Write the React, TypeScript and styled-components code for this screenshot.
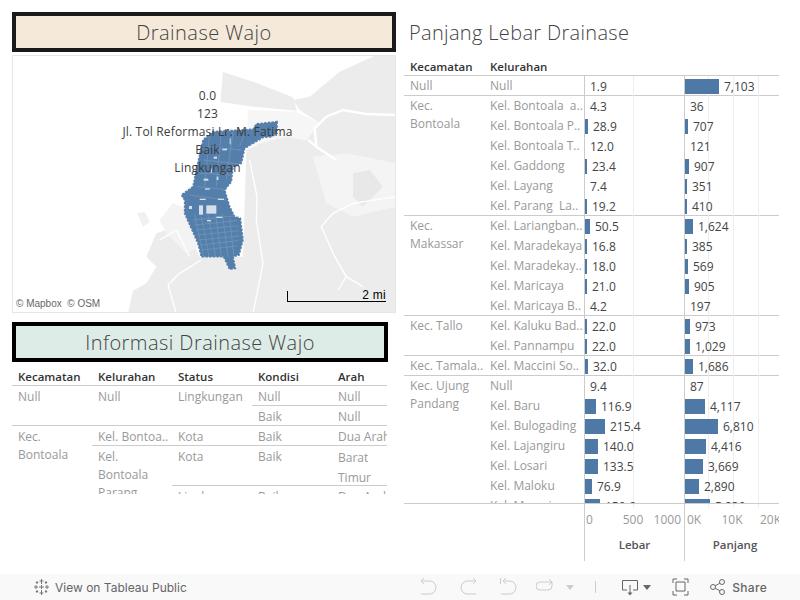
import React from 'react';
import styled, { createGlobalStyle } from 'styled-components';

const GlobalStyle = createGlobalStyle`
    html, body {
        margin: 0;
        padding: 0;
        background: #fff;
    }
    body {
        width: 800px;
        height: 600px;
        overflow: hidden;
        font-family: "Open Sans", Lato, sans-serif;
    }
`;

const Page = styled.div`
    width: 800px;
    height: 600px;
    display: flex;
    flex-direction: column;
`;

const Dashboard = styled.div`
    height: 574px;
    display: flex;
    overflow: hidden;
`;

const LeftColumn = styled.div`
    width: 400px;
    padding: 12px 0 0 12px;
    box-sizing: border-box;
`;

const Banner = styled.div<{ $bg: string; $border: string; $width: number }>`
    width: ${p => p.$width}px;
    height: 40px;
    box-sizing: border-box;
    border: 4px solid ${p => p.$border};
    background: ${p => p.$bg};
    color: #444;
    font-size: 20px;
    font-weight: 300;
    letter-spacing: 0.45px;
    line-height: 33px;
    text-align: center;
`;

const MapFrame = styled.div`
    position: relative;
    width: 384px;
    height: 258px;
    margin: 3px 0 9px;
    box-sizing: border-box;
    border: 1px solid #e6e6e6;
    overflow: hidden;
`;

const MapSvg = styled.svg`
    display: block;
`;

const MapLabels = styled.div`
    position: absolute;
    top: 31px;
    left: 0;
    width: 389px;
    text-align: center;
    font-size: 12px;
    line-height: 18px;
    letter-spacing: 0.17px;
    color: #3c3c3c;
`;

const Attribution = styled.div`
    position: absolute;
    left: 1px;
    bottom: 1px;
    padding: 0 2px;
    height: 14px;
    line-height: 14px;
    background: rgba(255, 255, 255, 0.7);
    font-family: "Liberation Sans", sans-serif;
    font-size: 10px;
    white-space: pre;
    color: #666;
`;

const Scale = styled.div`
    position: absolute;
    right: 9px;
    bottom: 10px;
    width: 98px;
    height: 10px;
    border-left: 1px solid #000;
    border-bottom: 1px solid #000;
    font-family: "Liberation Sans", sans-serif;
    font-size: 12px;
    line-height: 8px;
    letter-spacing: 0.3px;
    text-align: right;
    color: #000;
`;

const InfoTable = styled.div`
    width: 375px;
    height: 132px;
    overflow: hidden;
    display: grid;
    grid-template-columns: 80px 80px 80px 80px 55px;
    grid-template-rows: 23px;
    grid-auto-rows: 20px;
    font-size: 12px;
    color: #999;
`;

const HeadCell = styled.div`
    padding-left: 6px;
    line-height: 30px;
    color: #333;
    font-weight: 600;
    font-size: 11.5px;
`;

const InfoCell = styled.div<{ $rows?: number; $leading?: number; $col?: number }>`
    grid-row: span ${p => p.$rows || 1};
    ${p => (p.$col ? `grid-column: ${p.$col};` : '')}
    padding: 2px 0 0 6px;
    line-height: ${p => p.$leading || 18}px;
    border-top: 1px solid #ccc;
    box-sizing: border-box;
    overflow: hidden;
    white-space: nowrap;
`;

const RightColumn = styled.div`
    width: 400px;
`;

const SheetTitle = styled.div`
    padding: 20px 0 0 9px;
    height: 26px;
    font-size: 20px;
    font-weight: 300;
    letter-spacing: 0.33px;
    line-height: 26px;
    color: #444;
`;

const ColumnHeads = styled.div`
    display: flex;
    height: 29px;
    margin-left: 4px;
    box-sizing: border-box;
    padding-top: 13px;
`;

const ColumnHead = styled.div`
    width: 80px;
    padding-left: 6px;
    box-sizing: border-box;
    font-size: 11.5px;
    font-weight: 600;
    line-height: 16px;
    color: #333;
`;

const ChartBody = styled.div`
    width: 375px;
    margin-left: 4px;
    height: 428px;
    overflow: hidden;
`;

const Group = styled.div`
    display: flex;
    border-top: 1px solid #ccc;
    margin-bottom: -1px;
`;

const GroupName = styled.div`
    width: 80px;
    flex: none;
    padding: 1px 0 0 6px;
    box-sizing: border-box;
    font-size: 12px;
    line-height: 18px;
    color: #999;
    white-space: nowrap;
`;

const Row = styled.div`
    display: flex;
    height: 20px;
`;

const RowName = styled.div`
    width: 100px;
    padding-left: 6px;
    box-sizing: border-box;
    font-size: 12px;
    line-height: 20px;
    color: #999;
    white-space: pre;
    overflow: hidden;
`;

const Pane = styled.div<{ $width: number; $lines: number[] }>`
    display: flex;
    align-items: center;
    width: ${p => p.$width}px;
    height: 20px;
    box-sizing: border-box;
    border-left: 1px solid #ccc;
    background-image: ${p =>
        p.$lines.map(() => 'linear-gradient(#eeeeee, #eeeeee)').join(', ')};
    background-size: 1px 100%;
    background-repeat: no-repeat;
    background-position: ${p => p.$lines.map(x => `${x}px 0`).join(', ')};
`;

const Bar = styled.div`
    height: 15px;
    flex: none;
    background: #4e79a7;
`;

const BarValue = styled.span`
    margin-left: 5px;
    font-size: 12px;
    color: #444;
    white-space: nowrap;
`;

const AxisArea = styled.div`
    display: flex;
    width: 375px;
    margin-left: 4px;
    height: 58px;
    border-top: 1px solid #ccc;
    box-sizing: border-box;
`;

const AxisSpacer = styled.div`
    width: 180px;
`;

const AxisColumn = styled.div<{ $width: number }>`
    position: relative;
    width: ${p => p.$width}px;
    box-sizing: border-box;
    border-left: 1px solid #ccc;
    overflow: hidden;
`;

const AxisTicks = styled.div`
    height: 29px;
    font-size: 12px;
    line-height: 16px;
    color: #999;
    white-space: nowrap;
`;

const Tick = styled.span<{ $x: number; $align?: string }>`
    position: absolute;
    top: 8px;
    left: ${p => p.$x}px;
    width: 40px;
    text-align: ${p => p.$align || 'center'};
`;

const GridStub = styled.i<{ $x: number }>`
    position: absolute;
    top: 0;
    left: ${p => p.$x}px;
    width: 1px;
    height: 4px;
    background: #eee;
`;

const AxisTitle = styled.div<{ $shift?: number }>`
    text-align: center;
    padding: 4px 0 0 ${p => p.$shift || 0}px;
    font-size: 11.5px;
    font-weight: 600;
    line-height: 16px;
    color: #555;
`;

const Toolbar = styled.div`
    height: 26px;
    display: flex;
    align-items: center;
    background: #f9f9f9;
    padding-left: 33px;
    font-family: Inter, "Liberation Sans", sans-serif;
    font-size: 12px;
    color: #666;
`;

const LogoIcon = styled.svg`
    flex: none;
`;

const ToolbarText = styled.span<{ $strong?: boolean }>`
    margin-left: ${p => (p.$strong ? 6 : 5)}px;
    font-weight: ${p => (p.$strong ? 500 : 400)};
    letter-spacing: ${p => (p.$strong ? 0.3 : 0)}px;
`;

const ToolGroup = styled.div`
    margin-left: auto;
    display: flex;
    align-items: center;
    padding-right: 33px;
`;

const ToolIcon = styled.svg<{ $gap: number; $w: number }>`
    width: ${p => p.$w}px;
    height: 18px;
    margin-left: ${p => p.$gap}px;
    flex: none;
    fill: none;
`;

type Item = { name: string; lebar: number; panjang: number };
type GroupData = { name: string[]; items: Item[] };

const groups: GroupData[] = [
    { name: ['Null'], items: [{ name: 'Null', lebar: 1.9, panjang: 7103 }] },
    {
        name: ['Kec.', 'Bontoala'],
        items: [
            { name: 'Kel. Bontoala  a..', lebar: 4.3, panjang: 36 },
            { name: 'Kel. Bontoala P..', lebar: 28.9, panjang: 707 },
            { name: 'Kel. Bontoala T..', lebar: 12.0, panjang: 121 },
            { name: 'Kel. Gaddong', lebar: 23.4, panjang: 907 },
            { name: 'Kel. Layang', lebar: 7.4, panjang: 351 },
            { name: 'Kel. Parang  La..', lebar: 19.2, panjang: 410 },
        ],
    },
    {
        name: ['Kec.', 'Makassar'],
        items: [
            { name: 'Kel. Lariangban..', lebar: 50.5, panjang: 1624 },
            { name: 'Kel. Maradekaya', lebar: 16.8, panjang: 385 },
            { name: 'Kel. Maradekay..', lebar: 18.0, panjang: 569 },
            { name: 'Kel. Maricaya', lebar: 21.0, panjang: 905 },
            { name: 'Kel. Maricaya B..', lebar: 4.2, panjang: 197 },
        ],
    },
    {
        name: ['Kec. Tallo'],
        items: [
            { name: 'Kel. Kaluku Bad..', lebar: 22.0, panjang: 973 },
            { name: 'Kel. Pannampu', lebar: 22.0, panjang: 1029 },
        ],
    },
    { name: ['Kec. Tamala..'], items: [{ name: 'Kel. Maccini So..', lebar: 32.0, panjang: 1686 }] },
    {
        name: ['Kec. Ujung', 'Pandang'],
        items: [
            { name: 'Null', lebar: 9.4, panjang: 87 },
            { name: 'Kel. Baru', lebar: 116.9, panjang: 4117 },
            { name: 'Kel. Bulogading', lebar: 215.4, panjang: 6810 },
            { name: 'Kel. Lajangiru', lebar: 140.0, panjang: 4416 },
            { name: 'Kel. Losari', lebar: 133.5, panjang: 3669 },
            { name: 'Kel. Maloku', lebar: 76.9, panjang: 2890 },
            { name: 'Kel. Mamajang', lebar: 159.6, panjang: 5239 },
        ],
    },
];

const barWidth = (value: number, scale: number) => {
    const w = value * scale;
    return w < 1.5 ? 0 : Math.round(w);
};

const blueOutline =
    'M832 365 L832 400 L815 410 L790 412 L760 430 L735 445 L725 490 L700 500 L695 545 L675 570 L690 620 L705 650 L722 655 L730 720 L718 765 L700 770 L707 805 L690 808 L672 770 L605 770 L595 730 L555 640 L555 600 L545 585 L580 560 L590 510 L610 420 L640 395 L760 388 L770 372 Z';

const DrainageMap = () => (
    <MapSvg width="382" height="256" viewBox="40 168 1146 768">
        <rect x="0" y="0" width="1300" height="1000" fill="#fff" />
        <path
            fill="#ececec"
            d="M385 940 L400 872 L440 850 L470 800 L440 770 L470 700 L530 680 L560 690 L600 770 L730 770 L740 450 L780 430 L860 410 L920 420 L960 370 L900 330 L880 300 L930 290 L1020 215 L1130 165 L1190 165 L1190 940 Z"
        />
        <path fill="#ececec" d="M670 216 L760 245 L880 292 L892 332 L760 320 L662 306 Z" />
        <path fill="#f6f6f6" d="M745 330 L890 335 L960 370 L920 420 L860 410 L780 430 L740 445 Z" />
        <path fill="#f4f4f4" d="M940 470 L1040 460 L1190 490 L1190 620 L1060 650 L980 610 Z" />
        <path fill="#e8e8e8" d="M1060 520 L1110 510 L1150 560 L1090 620 L1060 590 Z" />
        <path fill="#f3f3f3" d="M520 610 L550 620 L600 740 L560 760 L500 700 L480 660 Z" />
        <path fill="#f0f0f0" d="M412 640 L435 635 L450 665 L430 680 Z" />
        <path
            fill="none"
            stroke="#fff"
            strokeWidth="7"
            d="M1190 345 L1100 342 L1030 330 L980 350 L945 385 L950 440 L925 420 M950 440 L1010 480"
        />
        <path
            fill="none"
            stroke="#fff"
            strokeWidth="4"
            d="M750 480 L772 590 L770 660 L790 790 L760 940 M1190 590 L1060 610 L1000 640 L965 680 L1005 770 L1040 830 L1090 860 M1040 830 L1015 870 M605 780 L540 820 L505 855 L530 940 M530 690 L480 720 M530 690 L570 770"
        />
        <clipPath id="wajo">
            <path d={blueOutline} />
        </clipPath>
        <path
            d={blueOutline}
            fill="#4e79a7"
            stroke="#4e79a7"
            strokeWidth="5"
            strokeDasharray="7 4"
            opacity="0.95"
        />
        <g clipPath="url(#wajo)">
            <g stroke="#7d9cc0" strokeWidth="2.500" fill="none" opacity="0.7">
                <path d="M580 660 L705 648 M585 675 L712 662 M590 690 L715 677 M595 705 L718 692 M598 720 L720 708 M602 735 L715 722 M606 750 L712 738" />
                <path d="M585 645 L612 770 M605 650 L628 770 M625 645 L648 770 M648 645 L665 770 M668 640 L685 770 M690 655 L702 765" />
                <path d="M620 440 L725 450 M612 480 L720 492 M600 520 L700 525 M590 560 L690 570 M570 585 L680 600" />
                <path d="M630 400 L615 560 M665 395 L650 560 M700 395 L680 540 M735 400 L720 440" />
            </g>
            <g fill="#d5e0ec">
                <rect x="620" y="616" width="30" height="25" />
                <rect x="598" y="616" width="12" height="28" />
                <rect x="612" y="536" width="14" height="6" />
                <rect x="632" y="506" width="5" height="12" />
                <rect x="668" y="446" width="14" height="5" />
                <rect x="642" y="470" width="10" height="6" />
                <rect x="651" y="530" width="5" height="10" />
                <rect x="616" y="565" width="14" height="4" />
                <rect x="600" y="596" width="18" height="4" />
                <rect x="655" y="596" width="18" height="4" />
                <rect x="568" y="618" width="9" height="9" />
                <rect x="690" y="415" width="3" height="18" />
                <rect x="650" y="650" width="18" height="4" />
                <rect x="622" y="660" width="12" height="4" />
            </g>
        </g>
    </MapSvg>
);

const Logo = () => (
    <LogoIcon width="17" height="18" viewBox="0 0 17 18" stroke="#777" strokeWidth="1">
        <path d="M8.500 1v5M6.500 3h4M8.500 12v5M6.500 15h4M3 7v4M1 9h4M14 7v4M12 9h4M6 9h5M8.500 7v4M4 3v3M2.800 4.500h2.400M13 3v3M11.800 4.500h2.400M4 12v3M2.800 13.500h2.400M13 12v3M11.800 13.500h2.400" />
    </LogoIcon>
);

const App = () => (
    <Page>
        <GlobalStyle />
        <Dashboard>
            <LeftColumn>
                <Banner $bg="#f5ead9" $border="#1a1a1a" $width={384}>Drainase Wajo</Banner>
                <MapFrame>
                    <DrainageMap />
                    <MapLabels>
                        <div>0.0</div>
                        <div>123</div>
                        <div>Jl. Tol Reformasi Lr. M. Fatima</div>
                        <div>Baik</div>
                        <div>Lingkungan</div>
                    </MapLabels>
                    <Attribution>© Mapbox  © OSM</Attribution>
                    <Scale>2 mi</Scale>
                </MapFrame>
                <Banner $bg="#deece8" $border="#000" $width={376}>Informasi Drainase Wajo</Banner>
                <InfoTable>
                    <HeadCell>Kecamatan</HeadCell>
                    <HeadCell>Kelurahan</HeadCell>
                    <HeadCell>Status</HeadCell>
                    <HeadCell>Kondisi</HeadCell>
                    <HeadCell>Arah</HeadCell>

                    <InfoCell $rows={2}>Null</InfoCell>
                    <InfoCell $rows={2}>Null</InfoCell>
                    <InfoCell $rows={2}>Lingkungan</InfoCell>
                    <InfoCell>Null</InfoCell>
                    <InfoCell>Null</InfoCell>
                    <InfoCell $col={4}>Baik</InfoCell>
                    <InfoCell>Null</InfoCell>

                    <InfoCell $rows={5}>Kec.<br />Bontoala</InfoCell>
                    <InfoCell>Kel. Bontoa..</InfoCell>
                    <InfoCell>Kota</InfoCell>
                    <InfoCell>Baik</InfoCell>
                    <InfoCell>Dua Arah</InfoCell>
                    <InfoCell $rows={4}>Kel.<br />Bontoala<br />Parang</InfoCell>
                    <InfoCell $rows={2}>Kota</InfoCell>
                    <InfoCell $rows={2}>Baik</InfoCell>
                    <InfoCell $rows={2} $leading={20}>Barat<br />Timur</InfoCell>
                    <InfoCell>Lingkungan</InfoCell>
                    <InfoCell>Baik</InfoCell>
                    <InfoCell>Dua Arah</InfoCell>
                </InfoTable>
            </LeftColumn>
            <RightColumn>
                <SheetTitle>Panjang Lebar Drainase</SheetTitle>
                <ColumnHeads>
                    <ColumnHead>Kecamatan</ColumnHead>
                    <ColumnHead>Kelurahan</ColumnHead>
                </ColumnHeads>
                <ChartBody>
                    {groups.map(group => (
                        <Group key={group.name.join(' ')}>
                            <GroupName>
                                {group.name.map(line => (
                                    <div key={line}>{line}</div>
                                ))}
                            </GroupName>
                            <div>
                                {group.items.map(item => (
                                    <Row key={item.name}>
                                        <RowName>{item.name}</RowName>
                                        <Pane $width={100} $lines={[48]}>
                                            <Bar style={{ width: barWidth(item.lebar, 0.095) }} />
                                            <BarValue>{item.lebar.toFixed(1)}</BarValue>
                                        </Pane>
                                        <Pane $width={95} $lines={[23, 48, 73]}>
                                            <Bar style={{ width: barWidth(item.panjang, 0.0048) }} />
                                            <BarValue>{item.panjang.toLocaleString('en-US')}</BarValue>
                                        </Pane>
                                    </Row>
                                ))}
                            </div>
                        </Group>
                    ))}
                </ChartBody>
                <AxisArea>
                    <AxisSpacer />
                    <AxisColumn $width={100}>
                        <GridStub $x={48} />
                        <AxisTicks>
                            <Tick $x={1} $align="left">0</Tick>
                            <Tick $x={28}>500</Tick>
                            <Tick $x={56} $align="right">1000</Tick>
                        </AxisTicks>
                        <AxisTitle>Lebar</AxisTitle>
                    </AxisColumn>
                    <AxisColumn $width={95}>
                        <GridStub $x={23} />
                        <GridStub $x={48} />
                        <GridStub $x={73} />
                        <AxisTicks>
                            <Tick $x={2} $align="left">0K</Tick>
                            <Tick $x={27}>10K</Tick>
                            <Tick $x={75} $align="left">20K</Tick>
                        </AxisTicks>
                        <AxisTitle $shift={6}>Panjang</AxisTitle>
                    </AxisColumn>
                </AxisArea>
            </RightColumn>
        </Dashboard>
        <Toolbar>
            <Logo />
            <ToolbarText>View on Tableau Public</ToolbarText>
            <ToolGroup>
                <ToolIcon $gap={0} $w={17} viewBox="0 0 17 18" stroke="#ccc">
                    <path d="M1 3H9.500a6.500 6.500 0 0 1 0 13H1M4 0L1 3l3 3" />
                </ToolIcon>
                <ToolIcon $gap={23} $w={17} viewBox="0 0 17 18" stroke="#ccc">
                    <path d="M16 3H7.500a6.500 6.500 0 0 0 0 13H16M13 0l3 3-3 3" />
                </ToolIcon>
                <ToolIcon $gap={23} $w={17} viewBox="0 0 17 18" stroke="#ccc">
                    <path d="M.5 0V6M3 3H9.500a6.500 6.500 0 0 1 0 13H1M6 0L3 3l3 3" />
                </ToolIcon>
                <ToolIcon $gap={19} $w={17} viewBox="0 0 17 18" stroke="#ccc">
                    <path d="M16 4H4a4 4 0 0 0 0 8h8a4 4 0 0 0 4-4V4M13 1l3 3-3 3" />
                </ToolIcon>
                <ToolIcon $gap={13} $w={8} viewBox="0 0 8 18" stroke="none">
                    <path d="M0 7h8l-4 5z" fill="#ccc" />
                </ToolIcon>
                <ToolIcon $gap={21} $w={1} viewBox="0 0 1 18" stroke="#ccc">
                    <path d="M.5 3v12" />
                </ToolIcon>
                <ToolIcon $gap={26} $w={16} viewBox="0 0 16 18" stroke="#666">
                    <path d="M5 12H.5V2.500H15.500V12H11M8 7V16" />
                    <path d="M5.500 14.500h5L8 17.500z" fill="#666" stroke="none" />
                </ToolIcon>
                <ToolIcon $gap={5} $w={8} viewBox="0 0 8 18" stroke="none">
                    <path d="M0 7h8l-4 5z" fill="#666" />
                </ToolIcon>
                <ToolIcon $gap={21} $w={17} viewBox="0 0 17 18" stroke="#666">
                    <path d="M5 1H1v4M12 1h4v4M5 17H1v-4M12 17h4v-4M4 4h9v9H4z" />
                </ToolIcon>
                <ToolIcon $gap={21} $w={16} viewBox="0 0 16 18" stroke="#666">
                    <circle cx="3" cy="9" r="2.500" />
                    <circle cx="12" cy="4" r="2.500" />
                    <circle cx="12" cy="14" r="2.500" />
                    <path d="M5.200 7.800L9.800 5.200M5.200 10.200L9.800 12.800" />
                </ToolIcon>
                <ToolbarText $strong>Share</ToolbarText>
            </ToolGroup>
        </Toolbar>
    </Page>
);

export default App;
